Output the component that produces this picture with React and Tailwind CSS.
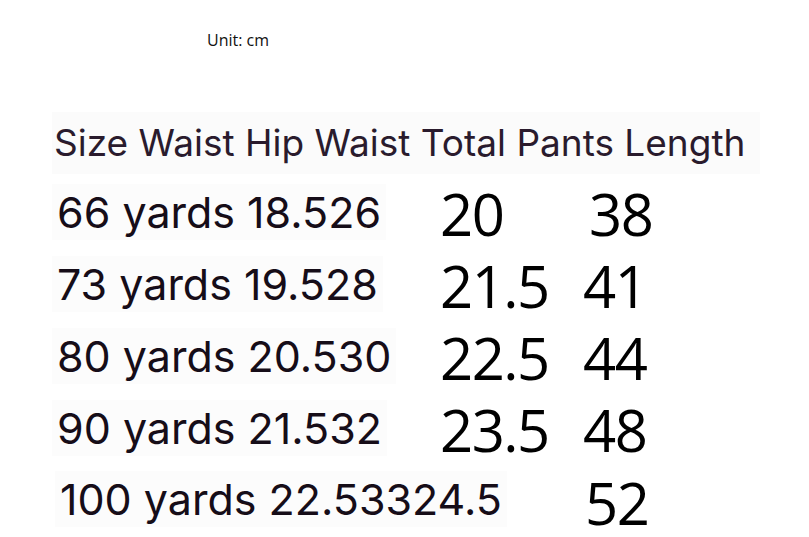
import React from 'react';

const rows = [
  { left: '66 yards 18.526', waist: '20', length: '38', lengthPad: 'pl-[6px]' },
  { left: '73 yards 19.528', waist: '21.5', length: '41', lengthPad: 'pl-0' },
  { left: '80 yards 20.530', waist: '22.5', length: '44', lengthPad: 'pl-0' },
  { left: '90 yards 21.532', waist: '23.5', length: '48', lengthPad: 'pl-0' },
];

const App = () => {
  return (
    <div className="w-[809px] h-[537px] bg-white overflow-hidden font-['Inter',sans-serif]">
      <div className="pt-[30px] pl-[207px] text-[16px] leading-[20px] text-[#111] font-['Open_Sans',sans-serif]">
        Unit: cm
      </div>

      <div className="mt-[62px] ml-[52px] w-[708px] h-[62px] bg-[#fbfbfb] flex items-center pl-[2px]">
        <span className="whitespace-nowrap text-[37px] leading-[48px] text-[#2a1b2d]">Size Waist Hip Waist Total Pants Length</span>
      </div>

      <div className="mt-[2px]">
        {rows.map((row) => (
          <div key={row.left} className="flex items-center h-[72px]">
            <div className="w-[440px] pl-[52px]">
              <span className="inline-block bg-[#fcfcfc] px-[5px] text-[43px] leading-[56px] text-[#160d18]">
                {row.left}
              </span>
            </div>
            <div className="w-[143px] font-['Open_Sans',sans-serif] text-[58px] leading-[64px] tracking-[-1.5px] text-black mt-[3px]">
              {row.waist}
            </div>
            <div className={`font-['Open_Sans',sans-serif] text-[58px] leading-[64px] tracking-[-1.5px] text-black mt-[3px] ${row.lengthPad}`}>
              {row.length}
            </div>
          </div>
        ))}
        <div className="flex items-center h-[70px]">
          <div className="w-[585px] pl-[55px]">
            <span className="inline-block bg-[#fcfcfc] px-[5px] text-[43px] leading-[56px] text-[#160d18]">
              100 yards 22.53324.5
            </span>
          </div>
          <div className="font-['Open_Sans',sans-serif] text-[58px] leading-[56px] tracking-[-1.5px] text-black mt-[8px]">52</div>
        </div>
      </div>
    </div>
  );
};

export default App;
